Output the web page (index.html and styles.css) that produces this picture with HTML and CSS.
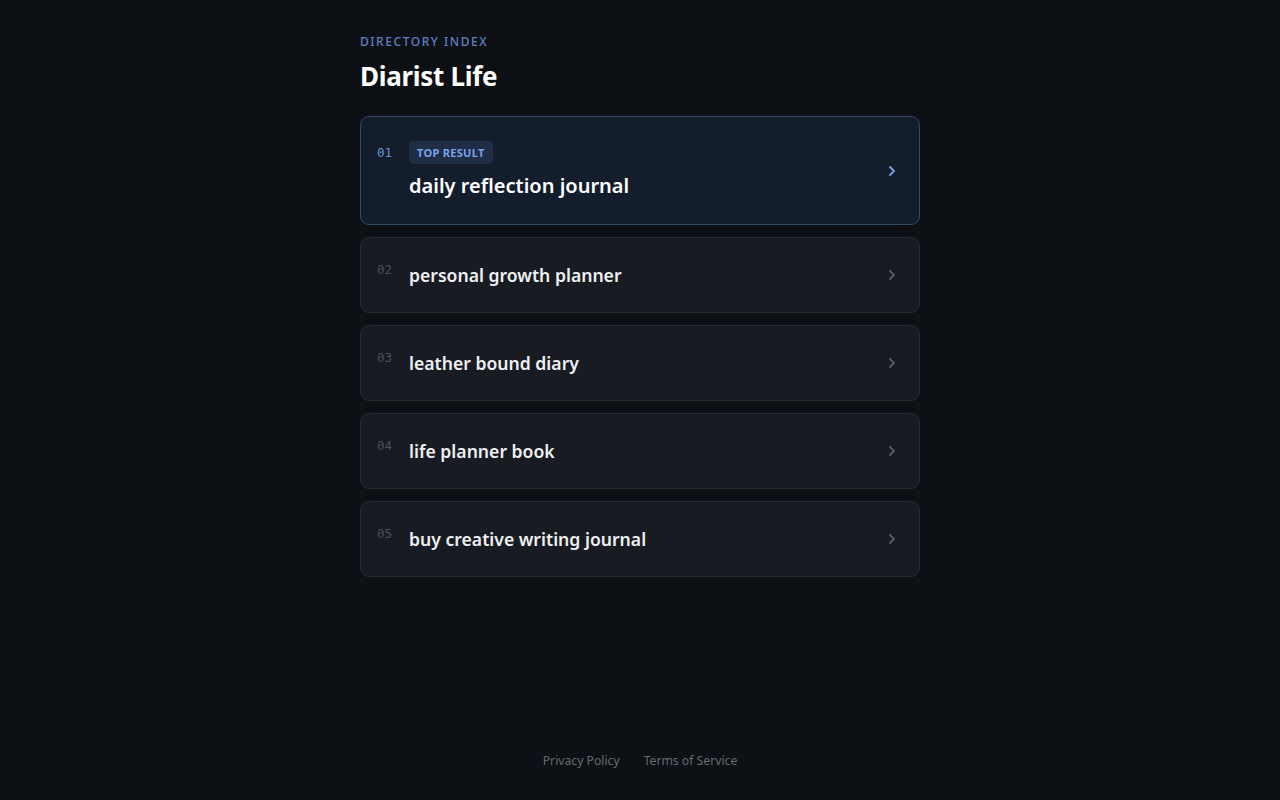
FILE: index.html
```html
<!DOCTYPE html>
<html lang="en">
<head>
<meta charset="utf-8">
<title>Diarist Life</title>
<link rel="stylesheet" href="styles.css">
</head>
<body>
<div class="page">
  <main class="wrap">
    <p class="eyebrow">DIRECTORY INDEX</p>
    <h1 class="title">Diarist Life</h1>
    <ul class="list">
      <li class="card card-top">
        <span class="num">01</span>
        <div class="body">
          <span class="badge">TOP RESULT</span>
          <span class="label">daily reflection journal</span>
        </div>
        <svg class="chev" viewBox="0 0 16 16" width="16" height="16"><path d="M6 4l4 4-4 4" fill="none" stroke="currentColor" stroke-width="1.8" stroke-linecap="round" stroke-linejoin="round"/></svg>
      </li>
      <li class="card">
        <span class="num">02</span>
        <div class="body"><span class="label">personal growth planner</span></div>
        <svg class="chev" viewBox="0 0 16 16" width="16" height="16"><path d="M6 4l4 4-4 4" fill="none" stroke="currentColor" stroke-width="1.8" stroke-linecap="round" stroke-linejoin="round"/></svg>
      </li>
      <li class="card">
        <span class="num">03</span>
        <div class="body"><span class="label">leather bound diary</span></div>
        <svg class="chev" viewBox="0 0 16 16" width="16" height="16"><path d="M6 4l4 4-4 4" fill="none" stroke="currentColor" stroke-width="1.8" stroke-linecap="round" stroke-linejoin="round"/></svg>
      </li>
      <li class="card">
        <span class="num">04</span>
        <div class="body"><span class="label">life planner book</span></div>
        <svg class="chev" viewBox="0 0 16 16" width="16" height="16"><path d="M6 4l4 4-4 4" fill="none" stroke="currentColor" stroke-width="1.8" stroke-linecap="round" stroke-linejoin="round"/></svg>
      </li>
      <li class="card">
        <span class="num">05</span>
        <div class="body"><span class="label">buy creative writing journal</span></div>
        <svg class="chev" viewBox="0 0 16 16" width="16" height="16"><path d="M6 4l4 4-4 4" fill="none" stroke="currentColor" stroke-width="1.8" stroke-linecap="round" stroke-linejoin="round"/></svg>
      </li>
    </ul>
  </main>
  <footer class="footer">
    <a href="#">Privacy Policy</a>
    <a href="#">Terms of Service</a>
  </footer>
</div>
</body>
</html>
```

FILE: styles.css
```css
* { box-sizing: border-box; }
html, body { margin: 0; padding: 0; }
body {
  background: #0d1014;
  font-family: "Noto Sans", "Open Sans", sans-serif;
  color: #f1f3f6;
}
.page {
  min-height: 800px;
  display: flex;
  flex-direction: column;
  align-items: center;
}
.wrap {
  width: 560px;
  padding-top: 34px;
  flex: 1;
}
.eyebrow {
  margin: 0;
  font-size: 12px;
  line-height: 16px;
  letter-spacing: 1.55px;
  font-weight: 500;
  color: #5f80c4;
}
.title {
  margin: 9px 0 0;
  font-size: 26px;
  line-height: 34px;
  font-weight: 700;
  color: #ffffff;
  letter-spacing: -0.3px;
}
.list {
  list-style: none;
  margin: 23px 0 0;
  padding: 0;
  display: flex;
  flex-direction: column;
  gap: 12px;
}
.card {
  display: flex;
  align-items: flex-start;
  gap: 16px;
  padding: 24px 19px 24px 16px;
  background: #181b21;
  border: 1px solid #272b32;
  border-radius: 9px;
  height: 76px;
}
.card-top {
  height: 109px;
  background: #131d2c;
  border-color: #34486a;
}
.num {
  width: 16px;
  font-family: "DejaVu Sans Mono", monospace;
  font-size: 12.5px;
  line-height: 14px;
  margin-top: 1px;
  color: #4b5059;
}
.card-top .num {
  color: #6a8fd0;
  margin-top: 5px;
}
.body {
  flex: 1;
  display: flex;
  flex-direction: column;
  align-items: flex-start;
  gap: 9px;
}
.badge {
  display: inline-block;
  padding: 0 8px;
  height: 23px;
  line-height: 23px;
  font-size: 11px;
  font-weight: 700;
  letter-spacing: 0.3px;
  background: #1f2d46;
  color: #7ba1e6;
  border-radius: 5px;
}
.label {
  font-size: 17.6px;
  line-height: 26px;
  font-weight: 600;
  color: #eef0f3;
}
.card-top .label {
  font-size: 20px;
  color: #ffffff;
}
.chev {
  align-self: center;
  color: #555a63;
  flex: none;
}
.card-top .chev { color: #7ba1e6; }
.footer {
  display: flex;
  gap: 24px;
  padding-bottom: 31px;
}
.footer a {
  font-size: 12.2px;
  line-height: 16px;
  color: #666b73;
  text-decoration: none;
}
```
